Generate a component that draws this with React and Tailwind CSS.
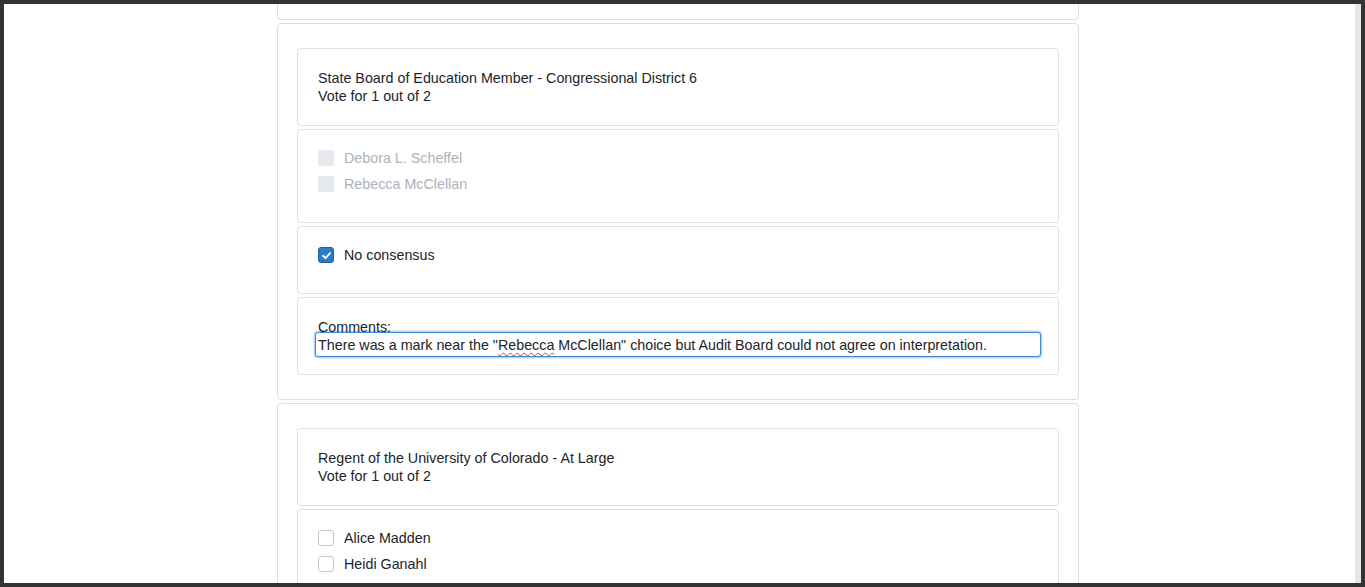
import React from 'react';

const font = { fontFamily: '"Liberation Sans", Arial, sans-serif' };

const Check = ({ state }) => {
  if (state === 'disabled') {
    return <span className="w-[16px] h-[16px] rounded-[3px] bg-[#e6eaee] shrink-0" />;
  }
  if (state === 'checked') {
    return (
      <span className="w-[16px] h-[16px] rounded-[3px] bg-[#2b7cc4] border border-[#1f5f9c] shrink-0 flex items-center justify-center">
        <svg width="11" height="11" viewBox="0 0 12 12" fill="none">
          <path d="M2.2 6.3 L4.9 8.9 L9.8 3.4" stroke="white" strokeWidth="2" strokeLinecap="round" strokeLinejoin="round" />
        </svg>
      </span>
    );
  }
  return <span className="w-[16px] h-[16px] rounded-[3px] bg-white border border-[#c4c8cd] shrink-0" />;
};

const Option = ({ label, state }) => (
  <div className="flex items-center h-[16px] mb-[10px] last:mb-0">
    <Check state={state} />
    <span className={`ml-[10px] ${state === 'disabled' ? 'text-[#a9b3bd]' : 'text-[#212529]'}`}>{label}</span>
  </div>
);

const Inner = ({ children, className = '' }) => (
  <div className={`border border-[#e0e0e0] rounded-[4px] bg-white ${className}`}>{children}</div>
);

const Contest = ({ title, choices, noConsensus, comment }) => (
  <div className="border border-[#dedede] rounded-[4px] bg-white px-[19px] py-[24px] flex flex-col gap-[3px]">
    <Inner className="p-[20px]">
      <div>{title}</div>
      <div>Vote for 1 out of 2</div>
    </Inner>
    <Inner className="p-[20px] pb-[30px]">
      {choices.map((c) => (
        <Option key={c.label} label={c.label} state={c.state} />
      ))}
    </Inner>
    {noConsensus && (
      <Inner className="p-[20px] pb-[30px]">
        <Option label="No consensus" state="checked" />
      </Inner>
    )}
    {comment && (
      <Inner className="p-[20px]">
        <div className="h-[18px]">Comments:</div>
        <div className="mt-[-4px] mb-[-3px] ml-[-3px] w-[calc(100%+6px)] h-[25px] px-[2px] flex items-center border border-[#3b8ad6] rounded-[3px] shadow-[0_0_2px_1px_rgba(80,150,220,0.55)] bg-white whitespace-nowrap overflow-hidden">
          There was a mark near the "
          <span className="underline decoration-wavy decoration-[#e53935] decoration-1 underline-offset-[2px]">Rebecca</span>
          &nbsp;McClellan" choice but Audit Board could not agree on interpretation.
        </div>
      </Inner>
    )}
  </div>
);

export default function App() {
  return (
    <div className="h-[587px] w-[1365px] bg-[#333333] p-[4px] overflow-hidden" style={font}>
      <div className="flex h-full">
        <div className="flex-1 bg-white overflow-hidden pr-[3px] text-[14.3px] leading-[18px] text-[#212529]">
          <div className="w-[802px] mx-auto flex flex-col gap-[3px]">
            <div className="h-[16px] border-x border-b border-[#dedede] rounded-b-[4px]" />
            <Contest
              title="State Board of Education Member - Congressional District 6"
              choices={[
                { label: 'Debora L. Scheffel', state: 'disabled' },
                { label: 'Rebecca McClellan', state: 'disabled' },
              ]}
              noConsensus
              comment
            />
            <Contest
              title="Regent of the University of Colorado - At Large"
              choices={[
                { label: 'Alice Madden', state: 'empty' },
                { label: 'Heidi Ganahl', state: 'empty' },
              ]}
            />
          </div>
        </div>
        <div className="w-[6px] h-full bg-[#e6e6e6]" />
      </div>
    </div>
  );
}
